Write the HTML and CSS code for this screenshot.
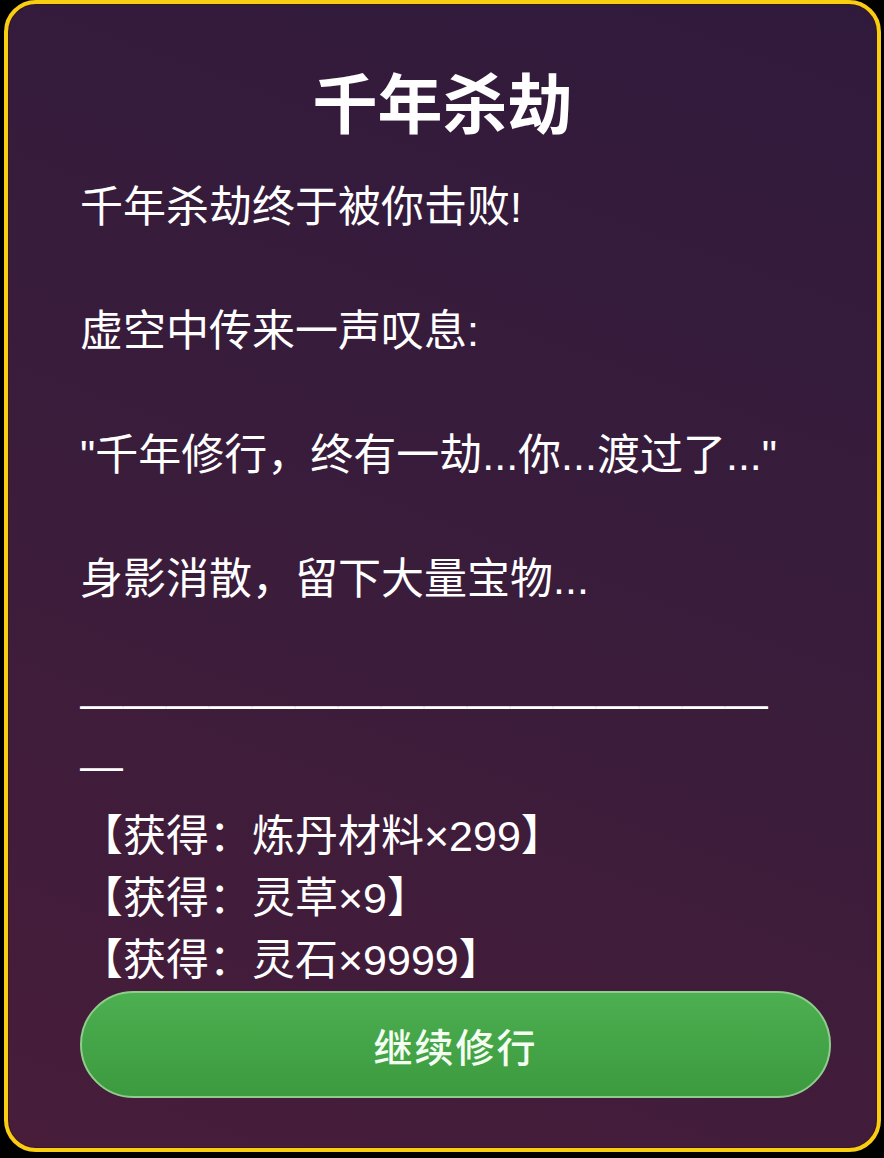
FILE: index.html
```html
<!DOCTYPE html>
<html lang="zh-CN">
<head>
    <meta charset="UTF-8">
    <meta name="viewport" content="width=device-width, initial-scale=1.0">
    <title>千年杀劫</title>
    <link rel="stylesheet" href="styles.css">
</head>
<body>
    <div class="modal">
        <h2 class="modal-title">千年杀劫</h2>
        <div class="modal-text">千年杀劫终于被你击败!

虚空中传来一声叹息:

"千年修行，终有一劫...你...渡过了..."

身影消散，留下大量宝物...

—————————————————</div>
        <div class="rewards">
            <div class="reward">【获得：炼丹材料×299】</div>
            <div class="reward">【获得：灵草×9】</div>
            <div class="reward">【获得：灵石×9999】</div>
        </div>
        <button class="btn-continue">继续修行</button>
    </div>
</body>
</html>
```

FILE: styles.css
```css
* {
    margin: 0;
    padding: 0;
    box-sizing: border-box;
}

body {
    background: #000;
    height: 1158px;
    font-family: 'Noto Sans CJK SC', 'Noto Sans', sans-serif;
    color: #fff;
}

.modal {
    margin: 0 3px 0 4px;
    height: 1152px;
    border: 4px solid #f9cd12;
    border-radius: 32px;
    background: linear-gradient(200deg, #301a3c 0%, #3a1c3b 50%, #471d3a 100%);
    box-shadow: inset 0 0 0 1px rgba(60, 20, 10, 0.6);
    padding: 56px 72px 0;
}

.modal-title {
    font-size: 65px;
    font-weight: 700;
    line-height: 80px;
    text-align: center;
    margin-bottom: 36px;
}

.modal-text,
.rewards {
    font-family: 'Liberation Sans', 'Noto Sans CJK SC', sans-serif;
    font-size: 43px;
    line-height: 62px;
}

.modal-text {
    white-space: pre-wrap;
    overflow-wrap: anywhere;
}

.rewards {
    margin-top: 9px;
}

.btn-continue {
    display: block;
    width: 751px;
    height: 107px;
    border: 2px solid #8fcd8c;
    border-radius: 54px;
    background: linear-gradient(180deg, #4caf50 0%, #3c9a3f 100%);
    color: #f4fff2;
    font-family: inherit;
    font-size: 39px;
    font-weight: 500;
    letter-spacing: 2px;
    cursor: pointer;
}
```
